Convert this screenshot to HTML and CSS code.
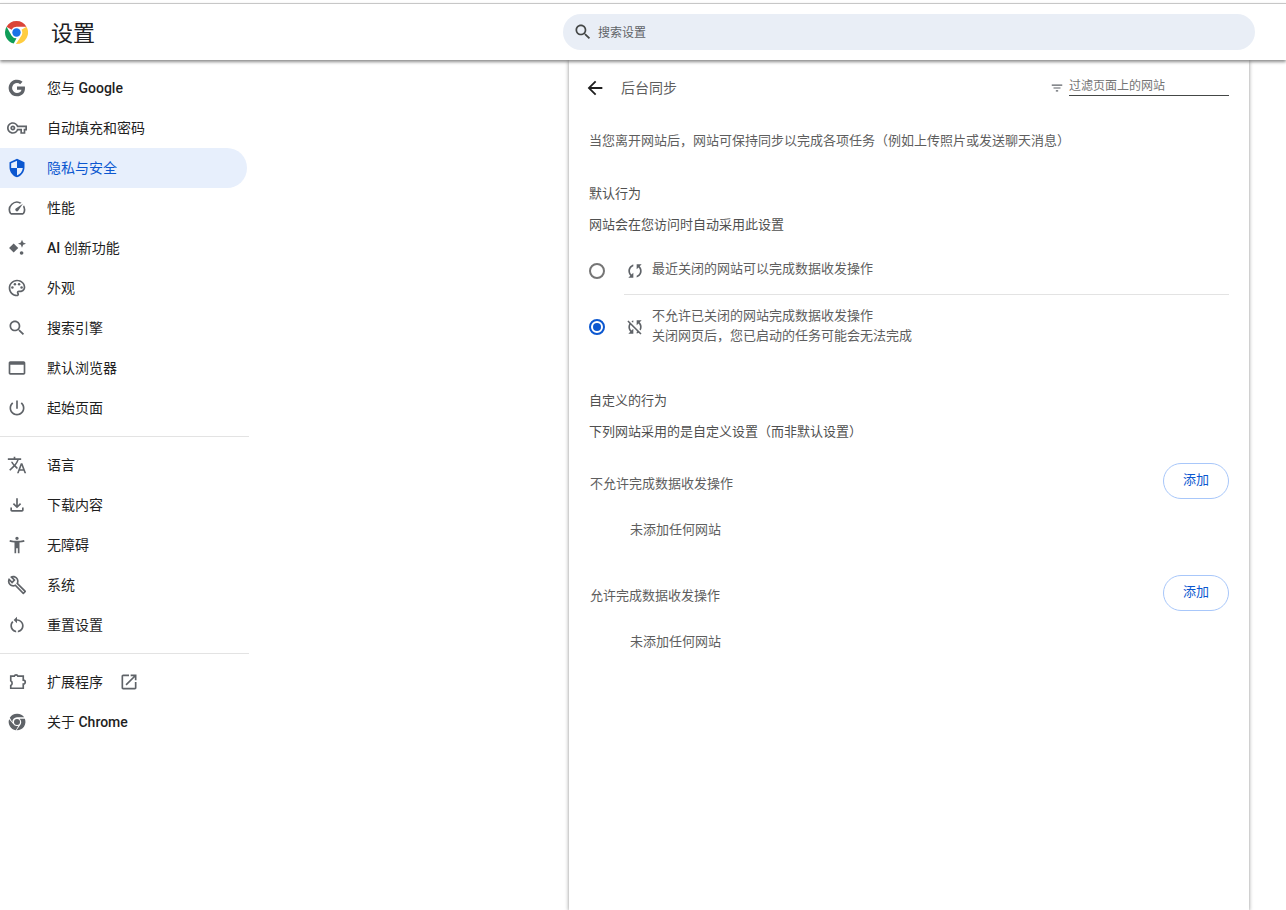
FILE: index.html
```html
<!DOCTYPE html>
<html lang="zh-CN">
<head>
<meta charset="UTF-8" />
<meta name="viewport" content="width=device-width, initial-scale=1" />
<title>设置 - 后台同步</title>
<link rel="stylesheet" href="styles.css">
</head>
<body>

<header class="topbar">
  <div class="brand">
    <svg class="logo" viewBox="0 0 24 24">
      <path fill="#db4437" d="M12 0a12 12 0 0 1 10.4 6H12a6 6 0 0 0-5.2 3L1.6 6A12 12 0 0 1 12 0z"/>
      <path fill="#ffcd40" d="M22.4 6A12 12 0 0 1 12 24h-.6l5.8-9a6 6 0 0 0 0-6z" />
      <path fill="#0f9d58" d="M1.6 6L6.8 15a6 6 0 0 0 5.2 3l-2.9 5.6A12 12 0 0 1 1.6 6z" />
      <circle cx="12" cy="12" r="5.6" fill="#fff"/>
      <circle cx="12" cy="12" r="4.4" fill="#1a73e8"/>
    </svg>
    <span class="brand-title">设置</span>
  </div>
  <div class="searchbox">
    <svg class="ic search-ic" viewBox="0 0 24 24"><path d="M15.5 14h-.79l-.28-.27C15.41 12.59 16 11.11 16 9.5 16 5.91 13.09 3 9.5 3S3 5.91 3 9.5 5.91 16 9.5 16c1.61 0 3.09-.59 4.23-1.57l.27.28v.79l5 4.99L20.49 19l-4.99-5zm-6 0C7.01 14 5 11.99 5 9.5S7.01 5 9.5 5 14 7.01 14 9.5 11.99 14 9.5 14z"/></svg>
    <span>搜索设置</span>
  </div>
</header>

<div class="layout">
  <nav class="sidebar">
    <a class="nav-item">
      <svg class="ic" viewBox="0 0 24 24"><path d="M21.6 12.2c0-.7-.06-1.4-.18-2.05H12v3.88h5.38a4.6 4.6 0 0 1-2 3.02v2.5h3.24c1.9-1.75 2.98-4.33 2.98-7.35z"/><path d="M12 22c2.7 0 4.96-.9 6.62-2.43l-3.24-2.5c-.9.6-2.04.96-3.38.96-2.6 0-4.8-1.76-5.6-4.12H3.06v2.58A10 10 0 0 0 12 22z"/><path d="M6.4 13.9a6 6 0 0 1 0-3.8V7.52H3.06a10 10 0 0 0 0 8.96L6.4 13.9z"/><path d="M12 5.98c1.47 0 2.78.5 3.82 1.5l2.86-2.87A10 10 0 0 0 3.06 7.52L6.4 10.1C7.2 7.74 9.4 5.98 12 5.98z"/></svg>
      <span>您与 <b>Google</b></span>
    </a>
    <a class="nav-item">
      <svg class="ic" viewBox="0 0 24 24"><path d="M22 19h-6v-4h-2.68c-1.14 2.42-3.6 4-6.32 4-3.86 0-7-3.14-7-7s3.14-7 7-7c2.72 0 5.17 1.58 6.32 4H24v6h-2v4zm-4-2h2v-4h2v-2H11.94l-.23-.67C11.01 8.34 9.11 7 7 7c-2.76 0-5 2.24-5 5s2.24 5 5 5c2.11 0 4.01-1.34 4.71-3.33l.23-.67H18v4zM7 15c-1.65 0-3-1.35-3-3s1.35-3 3-3 3 1.35 3 3-1.35 3-3 3zm0-4c-.55 0-1 .45-1 1s.45 1 1 1 1-.45 1-1-.45-1-1-1z"/></svg>
      <span>自动填充和密码</span>
    </a>
    <a class="nav-item active">
      <svg class="ic" viewBox="0 0 24 24"><path d="M12 1L3 5v6c0 5.55 3.84 10.74 9 12 5.16-1.26 9-6.45 9-12V5l-9-4zm0 10.99h7c-.53 4.12-3.28 7.79-7 8.94V12H5V6.3l7-3.11v8.8z"/></svg>
      <span>隐私与安全</span>
    </a>
    <a class="nav-item">
      <svg class="ic" viewBox="0 0 24 24"><path d="M20.38 8.57l-1.23 1.85a8 8 0 0 1-.22 7.58H5.07A8 8 0 0 1 15.58 6.85l1.85-1.23A10 10 0 0 0 3.35 19a2 2 0 0 0 1.72 1h13.85a2 2 0 0 0 1.74-1 10 10 0 0 0-.27-10.44zm-9.79 6.84a2 2 0 0 0 2.83 0l5.66-8.49-8.49 5.66a2 2 0 0 0 0 2.83z"/></svg>
      <span>性能</span>
    </a>
    <a class="nav-item">
      <svg class="ic" viewBox="0 0 24 24"><path d="M8 6.5l5.5 5.5L8 17.5 2.5 12z"/><path d="M18 2l1.4 3.4 3.4 1.4-3.4 1.4L18 11.6l-1.4-3.4-3.4-1.4 3.4-1.4z"/><circle cx="17.5" cy="18" r="2.2"/></svg>
      <span><b>AI</b> 创新功能</span>
    </a>
    <a class="nav-item">
      <svg class="ic" viewBox="0 0 24 24"><path d="M12 22C6.49 22 2 17.51 2 12S6.49 2 12 2s10 4.04 10 9c0 3.31-2.69 6-6 6h-1.77c-.28 0-.5.22-.5.5 0 .12.05.23.13.33.41.47.64 1.06.64 1.67 0 1.38-1.12 2.5-2.5 2.5zm0-18c-4.41 0-8 3.59-8 8s3.59 8 8 8c.28 0 .5-.22.5-.5 0-.16-.08-.28-.14-.35-.41-.46-.63-1.05-.63-1.65 0-1.38 1.12-2.5 2.5-2.5H16c2.21 0 4-1.79 4-4 0-3.86-3.59-7-8-7z"/><circle cx="6.5" cy="11.5" r="1.5"/><circle cx="9.5" cy="7.5" r="1.5"/><circle cx="14.5" cy="7.5" r="1.5"/><circle cx="17.5" cy="11.5" r="1.5"/></svg>
      <span>外观</span>
    </a>
    <a class="nav-item">
      <svg class="ic" viewBox="0 0 24 24"><path d="M15.5 14h-.79l-.28-.27C15.41 12.59 16 11.11 16 9.5 16 5.91 13.09 3 9.5 3S3 5.91 3 9.5 5.91 16 9.5 16c1.61 0 3.09-.59 4.23-1.57l.27.28v.79l5 4.99L20.49 19l-4.99-5zm-6 0C7.01 14 5 11.99 5 9.5S7.01 5 9.5 5 14 7.01 14 9.5 11.99 14 9.5 14z"/></svg>
      <span>搜索引擎</span>
    </a>
    <a class="nav-item">
      <svg class="ic" viewBox="0 0 24 24"><path d="M20 4H4c-1.11 0-2 .9-2 2v12c0 1.1.89 2 2 2h16c1.1 0 2-.9 2-2V6c0-1.1-.89-2-2-2zm0 14H4V8h16v10z"/></svg>
      <span>默认浏览器</span>
    </a>
    <a class="nav-item">
      <svg class="ic" viewBox="0 0 24 24"><path d="M13 3h-2v10h2V3zm4.83 2.17l-1.42 1.42C17.99 7.86 19 9.81 19 12c0 3.87-3.13 7-7 7s-7-3.13-7-7c0-2.19 1.01-4.14 2.58-5.42L6.17 5.17C4.23 6.82 3 9.26 3 12c0 4.97 4.03 9 9 9s9-4.03 9-9c0-2.74-1.23-5.18-3.17-6.83z"/></svg>
      <span>起始页面</span>
    </a>
    <div class="nav-sep"></div>
    <a class="nav-item">
      <svg class="ic" viewBox="0 0 24 24"><path d="M12.87 15.07l-2.54-2.51.03-.03c1.74-1.94 2.98-4.17 3.71-6.53H17V4h-7V2H8v2H1v1.99h11.17C11.5 7.92 10.44 9.75 9 11.35 8.07 10.32 7.3 9.19 6.69 8h-2c.73 1.63 1.73 3.17 2.98 4.56l-5.09 5.02L4 19l5-5 3.11 3.11.76-2.04zM18.5 10h-2L12 22h2l1.12-3h4.75L21 22h2l-4.5-12zm-2.62 7l1.62-4.33L19.12 17h-3.24z"/></svg>
      <span>语言</span>
    </a>
    <a class="nav-item">
      <svg class="ic" viewBox="0 0 24 24"><path d="M18 15v3H6v-3H4v3c0 1.1.9 2 2 2h12c1.1 0 2-.9 2-2v-3h-2zm-1-4l-1.41-1.41L13 12.17V4h-2v8.17L8.41 9.59 7 11l5 5 5-5z"/></svg>
      <span>下载内容</span>
    </a>
    <a class="nav-item">
      <svg class="ic" viewBox="0 0 24 24"><path d="M20.5 6c-2.61.7-5.67 1-8.5 1s-5.89-.3-8.5-1L3 8c1.86.5 4 .83 6 1v13h2v-6h2v6h2V9c2-.17 4.14-.5 6-1l-.5-2zM12 6c1.1 0 2-.9 2-2s-.9-2-2-2-2 .9-2 2 .9 2 2 2z"/></svg>
      <span>无障碍</span>
    </a>
    <a class="nav-item">
      <svg class="ic" viewBox="0 0 24 24"><path d="M22.61 18.99l-9.08-9.08c.93-2.34.45-5.1-1.44-7C9.79.61 6.21.4 3.66 2.26L7.5 6.11 6.08 7.52 2.25 3.69C.39 6.23.6 9.82 2.9 12.11c1.86 1.86 4.57 2.35 6.89 1.48l9.11 9.11c.39.39 1.02.39 1.41 0l2.3-2.3c.4-.38.4-1.01 0-1.41zm-3 1.6l-9.46-9.46c-.61.45-1.29.72-2 .82-1.36.2-2.79-.21-3.83-1.25C3.37 9.76 2.93 8.5 3 7.26l3.09 3.09 4.24-4.24-3.09-3.09c1.24-.07 2.49.37 3.44 1.31 1.08 1.08 1.49 2.57 1.24 3.96-.12.71-.42 1.37-.88 1.96l9.45 9.45-.88.88z"/></svg>
      <span>系统</span>
    </a>
    <a class="nav-item">
      <svg class="ic" viewBox="0 0 24 24"><path d="M12 5V2L8 6l4 4V7c3.31 0 6 2.69 6 6 0 2.97-2.17 5.43-5 5.91v2.02c3.95-.49 7-3.85 7-7.93 0-4.42-3.58-8-8-8zm-6 8c0-1.65.67-3.15 1.76-4.24L6.34 7.34C4.9 8.79 4 10.79 4 13c0 4.08 3.05 7.44 7 7.93v-2.02c-2.83-.48-5-2.94-5-5.91z"/></svg>
      <span>重置设置</span>
    </a>
    <div class="nav-sep"></div>
    <a class="nav-item">
      <svg class="ic" viewBox="0 0 24 24"><path fill="none" stroke="#5f6368" stroke-width="2" d="M4.5 5h4.2a2.3 2.3 0 0 1 4.4 0h6.4v4.7a2.4 2.4 0 0 1 0 4.8V19.500H4.500v-3.300a3.200 3.200 0 0 0 0-5.600z"/></svg>
      <span>扩展程序</span>
      <svg class="ic open-ic" viewBox="0 0 24 24"><path d="M19 19H5V5h7V3H5c-1.11 0-2 .9-2 2v14c0 1.1.89 2 2 2h14c1.1 0 2-.9 2-2v-7h-2v7zM14 3v2h3.59l-9.83 9.83 1.41 1.41L19 6.41V10h2V3h-7z"/></svg>
    </a>
    <a class="nav-item">
      <svg class="ic" viewBox="0 0 24 24"><path d="M12 2a10 10 0 0 0-8.66 5l3.1 5.4A5.6 5.6 0 0 1 12 6.4h8.66A10 10 0 0 0 12 2z"/><path d="M2.6 8.6A10 10 0 0 0 10.6 21.9l3.1-5.4a5.6 5.6 0 0 1-6.5-2.4z"/><path d="M21.4 8.2h-6.2a5.6 5.6 0 0 1 .5 7.8l-4.3 5.9h.6a10 10 0 0 0 9.4-13.7z"/><circle cx="12" cy="12" r="3.6"/></svg>
      <span>关于 <b>Chrome</b></span>
    </a>
  </nav>

  <main class="card">
    <div class="sub-head">
      <svg class="back-ic" viewBox="0 0 24 24"><path d="M20 11H7.83l5.59-5.59L12 4l-8 8 8 8 1.41-1.41L7.83 13H20v-2z"/></svg>
      <span class="sub-title">后台同步</span>
      <div class="filter">
        <svg class="filter-ic" viewBox="0 0 24 24"><path d="M10 18h4v-2h-4v2zM3 6v2h18V6H3zm3 7h12v-2H6v2z"/></svg>
        <span class="filter-input">过滤页面上的网站</span>
      </div>
    </div>

    <p class="desc">当您离开网站后，网站可保持同步以完成各项任务（例如上传照片或发送聊天消息）</p>

    <h2 class="sec-title">默认行为</h2>
    <p class="sec-sub">网站会在您访问时自动采用此设置</p>

    <div class="radio-row first">
      <span class="radio"></span>
      <svg class="row-ic" viewBox="0 0 24 24"><path d="M7.76 16.24C6.68 15.15 6 13.66 6 12c0-2.6 1.67-4.83 4-5.65V4.26C6.55 5.15 4 8.28 4 12c0 2.21.91 4.2 2.36 5.64L4 20h6v-6l-2.24 2.24z"/><path d="M20 4h-6v6l2.24-2.24C17.32 8.85 18 10.34 18 12c0 2.6-1.67 4.83-4 5.65v2.09c3.45-.89 6-4.02 6-7.74 0-2.21-.91-4.2-2.36-5.64L20 4z"/></svg>
      <span class="row-text">最近关闭的网站可以完成数据收发操作</span>
    </div>
    <div class="radio-row second">
      <span class="radio on"></span>
      <svg class="row-ic" viewBox="0 0 24 24"><path d="M10 6.35V4.26c-.8.21-1.55.54-2.23.96l1.46 1.46c.25-.12.5-.24.77-.33zm-7.14-.94l2.36 2.36C4.45 8.99 4 10.44 4 12c0 2.21.91 4.2 2.36 5.64L4 20h6v-6l-2.24 2.24C6.68 15.15 6 13.66 6 12c0-1 .25-1.94.68-2.77l8.08 8.08c-.25.13-.5.25-.77.34v2.09c.8-.21 1.55-.54 2.23-.96l2.36 2.36 1.27-1.27L4.14 4.14 2.86 5.41zM20 4h-6v6l2.24-2.24C17.32 8.85 18 10.34 18 12c0 1-.25 1.94-.68 2.77l1.46 1.46C19.55 15.01 20 13.56 20 12c0-2.21-.91-4.2-2.36-5.64L20 4z"/></svg>
      <div class="row-text">
        <div>不允许已关闭的网站完成数据收发操作</div>
        <div>关闭网页后，您已启动的任务可能会无法完成</div>
      </div>
    </div>

    <h2 class="sec-title custom">自定义的行为</h2>
    <p class="sec-sub">下列网站采用的是自定义设置（而非默认设置）</p>

    <div class="list-head">
      <span>不允许完成数据收发操作</span>
      <button class="add-btn">添加</button>
    </div>
    <div class="empty">未添加任何网站</div>

    <div class="list-head next">
      <span>允许完成数据收发操作</span>
      <button class="add-btn">添加</button>
    </div>
    <div class="empty">未添加任何网站</div>
  </main>
</div>

</body>
</html>
```

FILE: styles.css
```css
html, body {
  margin: 0;
  height: 100%;
  overflow: hidden;
}
body {
  background: #fff;
  color: #1f1f1f;
  font-family: Roboto, "Noto Sans CJK SC", sans-serif;
  font-size: 13px;
}
.ic {
  width: 20px;
  height: 20px;
  fill: #5f6368;
  flex: none;
}

/* top bar */
.topbar {
  height: 56px;
  border-top: 1px solid #c7c7c7;
  margin-top: 3px;
  display: flex;
  align-items: center;
  background: #fff;
  box-shadow: 0 2px 3px rgba(0, 0, 0, 0.45);
  position: relative;
  z-index: 2;
}
.brand {
  width: 563px;
  display: flex;
  align-items: center;
}
.logo {
  width: 23px;
  height: 23px;
  margin-left: 5px;
}
.brand-title {
  margin-left: 23px;
  margin-bottom: 2px;
  font-size: 22px;
  color: #202124;
}
.searchbox {
  width: 692px;
  height: 36px;
  border-radius: 18px;
  background: #e9eef6;
  display: flex;
  align-items: center;
  color: #5f6368;
  font-size: 12px;
}
.searchbox span {
  margin-bottom: 2px;
}
.search-ic {
  margin-left: 10px;
  margin-right: 5px;
  fill: #444746;
}

/* left menu */
.layout {
  display: flex;
  height: 850px;
}
.sidebar {
  width: 249px;
  margin-right: 320px;
  padding-top: 8px;
  flex: none;
}
.nav-item {
  height: 40px;
  display: flex;
  align-items: center;
  color: #1f1f1f;
  font-size: 14px;
  font-weight: 400;
  border-radius: 0 20px 20px 0;
  width: 247px;
}
.nav-item span {
  margin-bottom: 2px;
}
.nav-item b {
  font-weight: 500;
}
.nav-item .ic:first-child {
  margin-left: 7px;
  margin-right: 20px;
}
.nav-item.active {
  background: #e7effc;
  color: #0b57d0;
}
.nav-item.active .ic {
  fill: #0b57d0;
}
.nav-item .open-ic {
  margin-left: 16px;
}
.nav-sep {
  height: 1px;
  background: #e3e3e3;
  margin: 8px 0;
}

/* main card */
.card {
  width: 680px;
  flex: none;
  box-sizing: border-box;
  background: #fff;
  padding: 0 20px;
  box-shadow: 0 1px 4px rgba(0, 0, 0, 0.45);
  color: #5e5e5e;
}
.sub-head {
  height: 56px;
  display: flex;
  align-items: center;
}
.back-ic {
  width: 22px;
  height: 22px;
  fill: #1f1f1f;
  margin-left: -5px;
  margin-right: 15px;
}
.sub-title {
  font-size: 14px;
  margin-bottom: 2px;
}
.filter {
  margin-left: auto;
  display: flex;
  align-items: center;
}
.filter-ic {
  width: 14px;
  height: 14px;
  fill: #5f6368;
  margin-right: 5px;
}
.filter-input {
  width: 160px;
  height: 18px;
  line-height: 18px;
  font-size: 12px;
  border-bottom: 1px solid #444746;
  color: #757575;
  margin-bottom: 4px;
}
.desc {
  margin: 15px 0 0;
  line-height: 20px;
}
.sec-title {
  margin: 33px 0 0;
  font-size: 13px;
  font-weight: 400;
  line-height: 20px;
  color: #505050;
}
.sec-title.custom {
  margin-top: 0;
}
.sec-sub {
  margin: 11px 0 0;
  line-height: 20px;
  color: #505050;
}
.radio-row {
  display: flex;
  align-items: center;
}
.radio-row.first {
  height: 49px;
  margin-top: 11px;
  position: relative;
}
.radio-row.second {
  height: 64px;
  margin-bottom: 32px;
}
.radio-row.first::after {
  content: "";
  position: absolute;
  left: 35px;
  right: 0;
  bottom: 0;
  height: 1px;
  background: #e3e3e3;
}
.radio {
  width: 16px;
  height: 16px;
  box-sizing: border-box;
  border: 2px solid #757575;
  border-radius: 50%;
  flex: none;
  margin-right: 20px;
  position: relative;
}
.radio.on {
  border-color: #0b57d0;
}
.radio.on::after {
  content: "";
  position: absolute;
  left: 2px;
  top: 2px;
  width: 8px;
  height: 8px;
  border-radius: 50%;
  background: #0b57d0;
}
.row-ic {
  width: 20px;
  height: 20px;
  fill: #5f6368;
  flex: none;
  margin-right: 7px;
}
.row-text {
  line-height: 20px;
  margin-bottom: 2px;
}
.radio-row.first .row-text {
  margin-bottom: 4px;
}
.list-head {
  height: 36px;
  margin-top: 21px;
  display: flex;
  align-items: center;
  justify-content: space-between;
}
.list-head span {
  margin-top: 2px;
  padding-left: 1px;
}
.list-head.next {
  margin-top: 35px;
}
.add-btn {
  width: 66px;
  height: 36px;
  background: #fff;
  border: 1px solid #a8c7fa;
  border-radius: 18px;
  color: #0b57d0;
  font-family: inherit;
  font-size: 13px;
  padding: 0 0 6px;
}
.empty {
  margin-top: 21px;
  padding-left: 41px;
  line-height: 20px;
  height: 20px;
}
```
